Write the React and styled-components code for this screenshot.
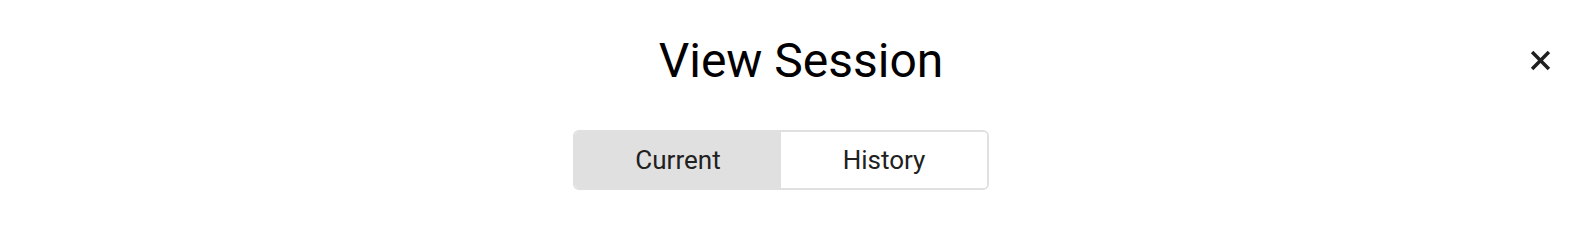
import React from 'react'
import styled, { createGlobalStyle } from 'styled-components'

const GlobalStyle = createGlobalStyle`
  html, body {
    margin: 0;
    padding: 0;
    background: #fff;
    font-family: Roboto, "Liberation Sans", sans-serif;
  }
`

function CloseIcon() {
  return (
    <svg width="21" height="21" viewBox="0 0 20 20" fill="none" stroke="#1f1f1f" strokeWidth="3.3">
      <path d="M2 2 18 18M18 2 2 18" />
    </svg>
  )
}

function App() {
  const [tab, setTab] = React.useState('current')

  return (
    <Dialog>
      <GlobalStyle />
      <Header>
        <Title>View Session</Title>
        <CloseButton aria-label="Close">
          <CloseIcon />
        </CloseButton>
      </Header>
      <TabRow>
        <Toggle>
          <Segment active={tab === 'current'} onClick={() => setTab('current')}>Current</Segment>
          <Segment active={tab === 'history'} onClick={() => setTab('history')}>History</Segment>
        </Toggle>
      </TabRow>
    </Dialog>
  )
}

const Dialog = styled.div`
  width: 1594px;
  height: 230px;
  box-sizing: border-box;
  padding-top: 33px;
  background: #fff;
`

const Header = styled.div`
  position: relative;
  display: flex;
  justify-content: center;
  align-items: center;
`

const Title = styled.h1`
  margin: 0;
  font-size: 48px;
  font-weight: 400;
  line-height: 56px;
  color: #000;
  padding-left: 8px;
`

const CloseButton = styled.button`
  position: absolute;
  right: 43px;
  top: 17px;
  width: 21px;
  height: 21px;
  padding: 0;
  border: none;
  background: none;
  display: flex;
  cursor: pointer;
`

const TabRow = styled.div`
  display: flex;
  justify-content: center;
  margin-top: 41px;
  padding-right: 32px;
`

const Toggle = styled.div`
  display: flex;
  border: 2px solid #e0e0e0;
  border-radius: 6px;
  overflow: hidden;
`

const Segment = styled.button`
  width: 206px;
  height: 56px;
  border: none;
  margin: 0;
  padding: 0;
  font-family: Roboto, "Liberation Sans", sans-serif;
  font-size: 26px;
  color: #212121;
  background: ${p => (p.active ? '#e0e0e0' : '#fff')};
  cursor: pointer;
`

export default App
